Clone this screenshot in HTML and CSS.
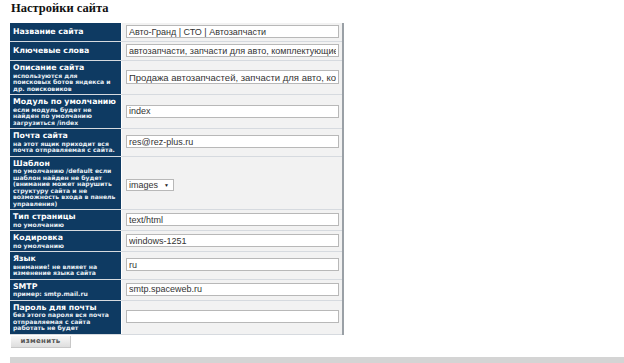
FILE: index.html
```html
<!DOCTYPE html>
<html lang="ru">
<head>
    <meta charset="UTF-8">
    <title>Настройки сайта</title>
    <link rel="stylesheet" href="styles.css">
</head>
<body>
    <div class="page">
        <h1>Настройки сайта</h1>
        <form>
            <table class="settings">
                <tr>
                    <th><span class="name">Название сайта</span></th>
                    <td><input type="text" value="Авто-Гранд | СТО | Автозапчасти"></td>
                </tr>
                <tr>
                    <th><span class="name">Ключевые слова</span></th>
                    <td><input type="text" value="автозапчасти, запчасти для авто, комплектующие"></td>
                </tr>
                <tr>
                    <th><span class="name">Описание сайта</span><span class="hint">используются для<br>поисковых ботов яндекса и др. поисковиков</span></th>
                    <td><input type="text" class="big" value="Продажа автозапчастей, запчасти для авто, комплектующие"></td>
                </tr>
                <tr>
                    <th><span class="name">Модуль по умолчанию</span><span class="hint">если модуль будет не найден по умолчанию загрузиться /index</span></th>
                    <td><input type="text" value="index"></td>
                </tr>
                <tr>
                    <th><span class="name">Почта сайта</span><span class="hint">на этот ящик приходит вся почта отправляемая с сайта.</span></th>
                    <td><input type="text" value="res@rez-plus.ru"></td>
                </tr>
                <tr>
                    <th><span class="name">Шаблон</span><span class="hint">по умолчанию /default если шаблон найден не будет (внимание может нарушить структуру сайта и не возможность входа в панель управления)</span></th>
                    <td><span class="select">images<span class="arrow">▼</span></span></td>
                </tr>
                <tr>
                    <th><span class="name">Тип страницы</span><span class="hint">по умолчанию</span></th>
                    <td><input type="text" value="text/html"></td>
                </tr>
                <tr>
                    <th><span class="name">Кодировка</span><span class="hint">по умолчанию</span></th>
                    <td><input type="text" value="windows-1251"></td>
                </tr>
                <tr>
                    <th><span class="name">Язык</span><span class="hint">внимание! не влияет на изменение языка сайта</span></th>
                    <td><input type="text" value="ru"></td>
                </tr>
                <tr>
                    <th><span class="name">SMTP</span><span class="hint">пример: smtp.mail.ru</span></th>
                    <td><input type="text" value="smtp.spaceweb.ru"></td>
                </tr>
                <tr>
                    <th><span class="name">Пароль для почты</span><span class="hint">без этого пароля вся почта отправляемая с сайта работать не будет</span></th>
                    <td><input type="password" value=""></td>
                </tr>
            </table>
            <button type="button" class="submit">изменить</button>
        </form>
        <div class="footer-bar"></div>
    </div>
</body>
</html>
```

FILE: styles.css
```css
:root {
    --navy: #0e3a62;
    --cell-bg: #f2f2f2;
    --line: #d6dadf;
    --input-border: #b8b8b8;
}

body {
    margin: 0;
    background: #fff;
    font-family: "DejaVu Sans", Verdana, sans-serif;
}

.page {
    padding-left: 10px;
}

h1 {
    font-family: "Liberation Serif", "Times New Roman", serif;
    font-size: 12.5px;
    font-weight: bold;
    color: #111;
    margin: 0;
    padding: 1px 0 0 1px;
    height: 22px;
    line-height: 14px;
}

.settings {
    border-collapse: collapse;
    width: 334px;
    border-right: 2px solid #9aa0a6;
}

.settings th {
    width: 105px;
    background: var(--navy);
    color: #fff;
    text-align: left;
    vertical-align: middle;
    padding: 2px 3px 2px 3px;
    border-bottom: 1px solid var(--line);
    border-right: 1px solid #fff;
}

.settings td {
    background: var(--cell-bg);
    vertical-align: middle;
    padding: 2px 3px 3px 4px;
    border-bottom: 1px solid var(--line);
}

.name {
    display: block;
    font-size: 7.8px;
    font-weight: bold;
    line-height: 9.5px;
}

.hint {
    display: block;
    font-size: 6.1px;
    font-weight: bold;
    line-height: 6.5px;
    color: #e8eef4;
}

input {
    display: block;
    box-sizing: border-box;
    width: 213px;
    height: 13px;
    margin: 0;
    padding: 0 2px;
    border: 1px solid var(--input-border);
    background: #fff;
    font-family: "Liberation Sans", Arial, sans-serif;
    font-size: 9px;
    color: #333;
}

input.big {
    height: 14px;
    font-size: 9.5px;
}

.select {
    display: inline-block;
    box-sizing: border-box;
    height: 12px;
    padding: 0 4px 0 2px;
    border: 1px solid var(--input-border);
    background: #fff;
    font-family: "Liberation Sans", Arial, sans-serif;
    font-size: 9px;
    line-height: 10px;
    color: #333;
}

.arrow {
    font-size: 5px;
    margin-left: 6px;
    vertical-align: 1px;
    color: #222;
}

.submit {
    display: block;
    width: 60px;
    height: 12px;
    margin: 1px 0 0 1px;
    padding: 0;
    border: none;
    border-right: 1px solid #c8c8c8;
    border-bottom: 1px solid #c8c8c8;
    background: linear-gradient(#f8f8f8, #dedede);
    font-family: "DejaVu Sans", Verdana, sans-serif;
    font-size: 7px;
    font-weight: bold;
    color: #555;
    letter-spacing: 0.3px;
}

.footer-bar {
    margin-top: 9px;
    height: 10px;
    background: #d4d4d4;
}
```
